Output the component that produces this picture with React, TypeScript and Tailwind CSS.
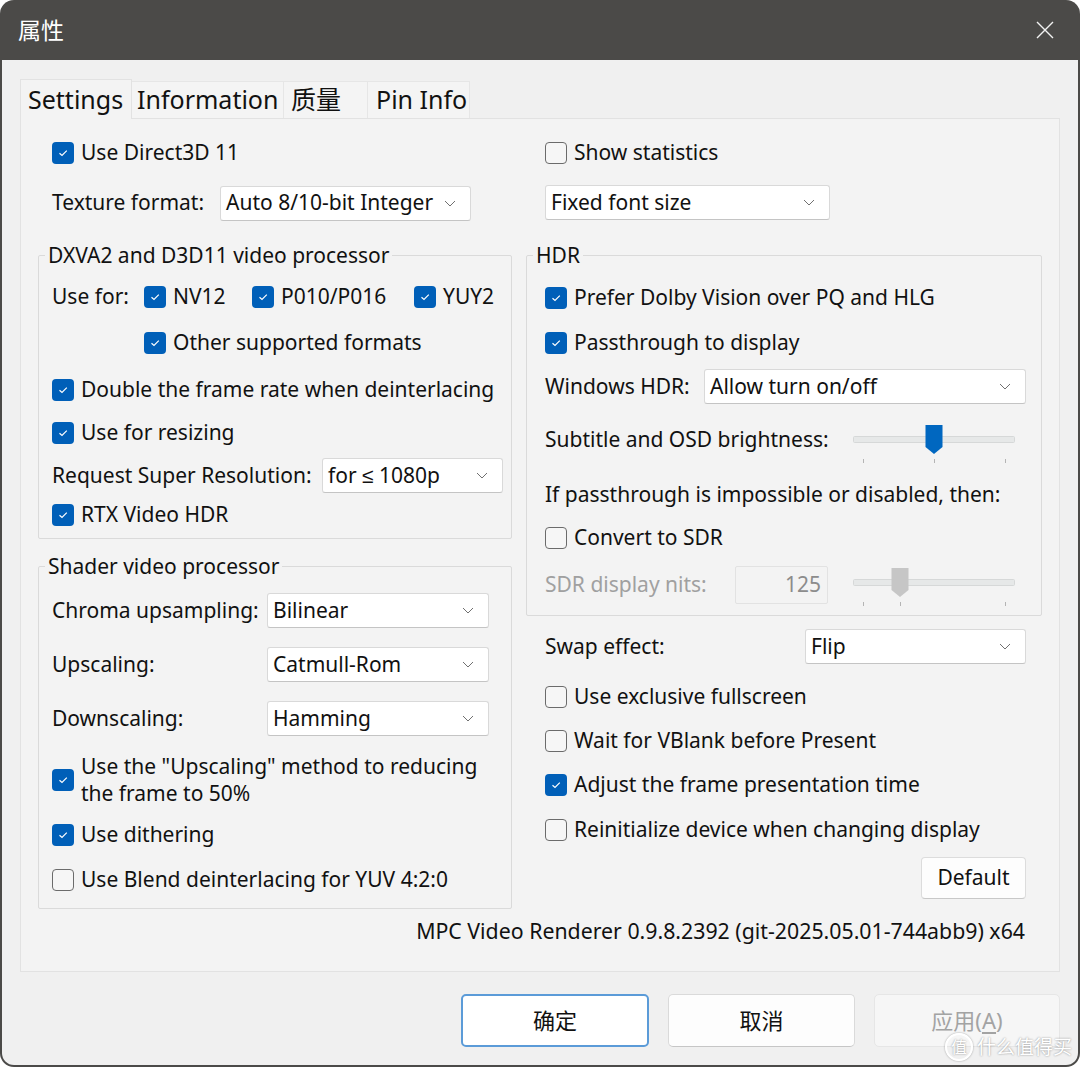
import React from "react"

const FONT = "font-['Noto_Sans','Noto_Sans_CJK_SC',sans-serif]"

function Box({ checked }: { checked?: boolean }) {
  if (checked) {
    return (
      <span className="flex h-[22px] w-[22px] shrink-0 items-center justify-center rounded-[4px] bg-[#005fb8]">
        <svg width="12" height="10" viewBox="0 0 12 10">
          <path d="M2.5 5.2 L5 7.4 L9.8 2.6" fill="none" stroke="#ffffff" strokeWidth="1.2" />
        </svg>
      </span>
    )
  }
  return <span className="h-[22px] w-[22px] shrink-0 rounded-[4px] border border-[#6b6b6b] bg-[#f6f6f6]" />
}

function Check({ checked, label, className = "" }: { checked?: boolean; label: React.ReactNode; className?: string }) {
  return (
    <div className={`flex h-[36px] items-center gap-[7px] ${className}`}>
      <Box checked={checked} />
      <span className="whitespace-nowrap">{label}</span>
    </div>
  )
}

function Select({ value, className = "" }: { value: React.ReactNode; className?: string }) {
  return (
    <div
      className={`flex h-[35px] shrink-0 items-center justify-between rounded-[3px] border border-[#d9d9d9] border-b-[#c4c4c4] bg-white pl-[5px] pr-[14px] ${className}`}
    >
      <span className="whitespace-nowrap">{value}</span>
      <svg width="12" height="7" viewBox="0 0 12 7">
        <path d="M1 1 L6 6 L11 1" fill="none" stroke="#707070" strokeWidth="1" />
      </svg>
    </div>
  )
}

function Slider({ pos, disabled }: { pos: number; disabled?: boolean }) {
  const fill = disabled ? "#c6c6c6" : "#0067c0"
  return (
    <svg width="162" height="42" viewBox="0 0 162 42" className="shrink-0">
      <rect x="0.5" y="12.5" width="161" height="6" rx="1" fill="#e6e8e8" stroke="#d6d8d8" />
      <path d={`M${pos - 8.5} 1 H${pos + 8.5} V23 L${pos} 30 L${pos - 8.5} 23 Z`} fill={fill} />
      {[10, pos, 152].map((x) => (
        <line key={x} x1={x + 0.5} y1="35" x2={x + 0.5} y2="39" stroke="#b4b4b4" strokeWidth="1" />
      ))}
    </svg>
  )
}

function Group({
  title,
  children,
  className = "",
  legendClass = "",
}: {
  title: string
  children: React.ReactNode
  className?: string
  legendClass?: string
}) {
  return (
    <fieldset className={`rounded-[2px] border border-[#dadada] ${className}`}>
      <legend className={`px-[3px] leading-[28px] ${legendClass}`}>{title}</legend>
      {children}
    </fieldset>
  )
}

export default function App() {
  return (
    <div className={`relative h-[1068px] w-[1080px] bg-white text-[21px] text-[#111] ${FONT}`}>
      <div className="flex h-[1067px] flex-col overflow-hidden rounded-[14px] bg-[#4b4a48]">
        {/* title bar */}
        <div className="flex h-[60px] shrink-0 items-center justify-between pl-[18px] pr-[26px]">
          <span className="text-[23px] text-white">属性</span>
          <svg width="18" height="18" viewBox="0 0 18 18">
            <path d="M1 1 L17 17 M17 1 L1 17" stroke="#f2f2f2" strokeWidth="1.4" />
          </svg>
        </div>

        <div className="mx-[2px] mb-[2px] flex flex-1 flex-col rounded-b-[12px] bg-[#f0f0f0] px-[18px] pt-[19px]">
          {/* tabs */}
          <div className="flex h-[39px] items-end text-[25px]">
            <div className="relative z-10 -mb-px flex h-[40px] w-[112px] items-center border-x border-t border-[#e2e2e2] bg-[#f3f3f3] pl-[7px]">
              Settings
            </div>
            <div className="flex h-[37px] w-[152px] items-center border-r border-t border-[#e6e6e6] bg-[#f4f4f4] pl-[5px]">
              Information
            </div>
            <div className="flex h-[37px] w-[84px] items-center border-r border-t border-[#e6e6e6] bg-[#f4f4f4] pl-[7px]">
              质量
            </div>
            <div className="flex h-[37px] w-[102px] items-center border-r border-t border-[#e6e6e6] bg-[#f4f4f4] pl-[8px]">
              Pin Info
            </div>
          </div>

          {/* tab panel */}
          <div className="flex h-[854px] flex-col border border-[#e2e2e2] bg-[#f3f3f3] px-[17px] pt-[16px]">
            <div className="flex gap-[14px]">
              {/* left column */}
              <div className="flex w-[474px] flex-col">
                <Check checked label="Use Direct3D 11" className="h-[34px] pl-[14px]" />
                <div className="mt-[14px] flex h-[36px] items-center pl-[14px]">
                  <span className="w-[168px] whitespace-nowrap">Texture format:</span>
                  <Select value="Auto 8/10-bit Integer" className="w-[251px]" />
                </div>

                <Group
                  title="DXVA2 and D3D11 video processor"
                  className="mt-[20px] pb-[5px] pl-[13px]"
                  legendClass="-ml-[7px]"
                >
                  <div className="mt-[10px] flex h-[36px] items-center">
                    <span className="w-[92px]">Use for:</span>
                    <Check checked label="NV12" className="w-[108px]" />
                    <Check checked label="P010/P016" className="w-[162px]" />
                    <Check checked label="YUY2" />
                  </div>
                  <Check checked label="Other supported formats" className="mt-[10px] pl-[92px]" />
                  <Check checked label="Double the frame rate when deinterlacing" className="mt-[11px]" />
                  <Check checked label="Use for resizing" className="mt-[7px]" />
                  <div className="mt-[7px] flex h-[35px] items-center">
                    <span className="w-[270px] whitespace-nowrap">Request Super Resolution:</span>
                    <Select
                      value={
                        <>
                          for <span className="font-['Liberation_Sans',sans-serif]">≤</span> 1080p
                        </>
                      }
                      className="w-[181px]"
                    />
                  </div>
                  <Check checked label="RTX Video HDR" className="mt-[4px]" />
                </Group>

                <Group title="Shader video processor" className="mt-[13px] pb-[10px] pl-[13px]" legendClass="-ml-[7px]">
                  <div className="mt-[13px] flex h-[35px] items-center">
                    <span className="w-[215px] whitespace-nowrap">Chroma upsampling:</span>
                    <Select value="Bilinear" className="w-[222px]" />
                  </div>
                  <div className="mt-[19px] flex h-[35px] items-center">
                    <span className="w-[215px]">Upscaling:</span>
                    <Select value="Catmull-Rom" className="w-[222px]" />
                  </div>
                  <div className="mt-[19px] flex h-[35px] items-center">
                    <span className="w-[215px]">Downscaling:</span>
                    <Select value="Hamming" className="w-[222px]" />
                  </div>
                  <div className="mt-[17px] flex items-center gap-[7px]">
                    <Box checked />
                    <span className="leading-[27px]">
                      Use the "Upscaling" method to reducing
                      <br />
                      the frame to 50%
                    </span>
                  </div>
                  <Check checked label="Use dithering" className="mt-[10px]" />
                  <Check label="Use Blend deinterlacing for YUV 4:2:0" className="mt-[9px]" />
                </Group>
              </div>

              {/* right column */}
              <div className="flex w-[516px] flex-col">
                <Check label="Show statistics" className="h-[34px] pl-[19px]" />
                <div className="mt-[14px] pl-[19px]">
                  <Select value="Fixed font size" className="w-[285px]" />
                </div>

                <Group title="HDR" className="mt-[21px] pb-[11px] pl-[18px] pr-[15px]" legendClass="-ml-[12px]">
                  <Check checked label="Prefer Dolby Vision over PQ and HLG" className="mt-[11px]" />
                  <Check checked label="Passthrough to display" className="mt-[9px]" />
                  <div className="mt-[8px] flex h-[35px] items-center">
                    <span className="w-[159px] whitespace-nowrap">Windows HDR:</span>
                    <Select value="Allow turn on/off" className="flex-1" />
                  </div>
                  <div className="mt-[16px] flex h-[40px] items-center">
                    <span className="whitespace-nowrap">Subtitle and OSD brightness:</span>
                    <div className="ml-auto mr-[11px] h-[40px] self-start pt-[4px]">
                      <Slider pos={81} />
                    </div>
                  </div>
                  <div className="mt-[20px] flex h-[30px] items-center whitespace-nowrap">
                    If passthrough is impossible or disabled, then:
                  </div>
                  <Check label="Convert to SDR" className="mt-[10px]" />
                  <div className="mt-[10px] flex h-[38px] items-center text-[#a0a0a0]">
                    <span className="w-[190px] whitespace-nowrap">SDR display nits:</span>
                    <div className="flex h-[38px] w-[93px] items-center justify-end rounded-[2px] border border-[#e2e2e2] pr-[6px] text-[#8c8c8c]">
                      125
                    </div>
                    <div className="ml-auto mr-[11px] h-[38px] self-start pt-[1px]">
                      <Slider pos={47} disabled />
                    </div>
                  </div>
                </Group>

                <div className="mt-[13px] flex h-[35px] items-center pl-[19px] pr-[16px]">
                  <span className="w-[260px]">Swap effect:</span>
                  <Select value="Flip" className="flex-1" />
                </div>
                <Check label="Use exclusive fullscreen" className="mt-[15px] pl-[19px]" />
                <Check label="Wait for VBlank before Present" className="mt-[8px] pl-[19px]" />
                <Check checked label="Adjust the frame presentation time" className="mt-[8px] pl-[19px]" />
                <Check label="Reinitialize device when changing display" className="mt-[9px] pl-[19px]" />
                <div className="mt-[9px] mr-[16px] flex h-[42px] w-[105px] items-center justify-center self-end rounded-[4px] border border-[#dcdcdc] border-b-[#c8c8c8] bg-[#fdfdfd]">
                  Default
                </div>
              </div>
            </div>

            <div className="mt-[8px] flex h-[28px] items-center justify-end pr-[17px] whitespace-nowrap text-[21.3px]">
              MPC Video Renderer 0.9.8.2392 (git-2025.05.01-744abb9) x64
            </div>
          </div>

          {/* dialog buttons */}
          <div className="mt-[22px] flex justify-end gap-[19px] text-[22px]">
            <div className="flex h-[53px] w-[188px] items-center justify-center rounded-[5px] border-2 border-[#5b9bd8] bg-white">
              确定
            </div>
            <div className="flex h-[53px] w-[187px] items-center justify-center rounded-[5px] border border-[#dadada] border-b-[#c6c6c6] bg-[#fdfdfd]">
              取消
            </div>
            <div className="flex h-[53px] w-[186px] items-center justify-center rounded-[5px] border border-[#e6e6e6] bg-[#f6f6f6] text-[#a3a3a3]">
              应用(<span className="underline underline-offset-[3px]">A</span>)
            </div>
          </div>
        </div>
      </div>

      {/* watermark */}
      <div className="absolute bottom-[7px] right-[8px] flex items-center gap-[4px] text-[19px] leading-none text-white [text-shadow:0_0_2px_rgba(0,0,0,0.45)]">
        <span className="flex h-[28px] w-[28px] items-center justify-center rounded-full border-2 border-white text-[16px] shadow-[0_0_2px_rgba(0,0,0,0.4)]">
          值
        </span>
        <span>什么值得买</span>
      </div>
    </div>
  )
}
